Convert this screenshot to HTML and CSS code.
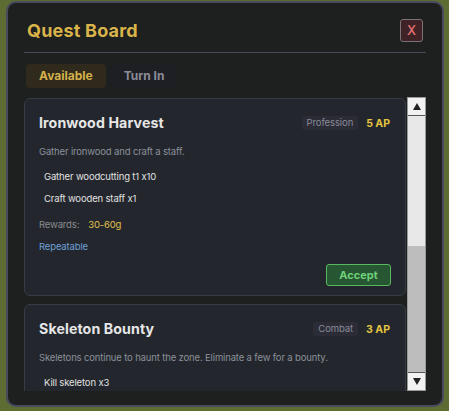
FILE: index.html
```html
<!DOCTYPE html>
<html>
<head>
<meta charset="utf-8">
<link rel="stylesheet" href="styles.css">
</head>
<body>
<div class="panel">
  <div class="header">
    <h1 class="title">Quest Board</h1>
    <button class="close">X</button>
  </div>
  <div class="tabs">
    <div class="tab active">Available</div>
    <div class="tab">Turn In</div>
  </div>
  <div class="list-wrap">
    <div class="list">
      <div class="card">
        <div class="card-head">
          <div class="card-title">Ironwood Harvest</div>
          <div class="meta"><span class="tag">Profession</span><span class="ap">5 AP</span></div>
        </div>
        <div class="desc">Gather ironwood and craft a staff.</div>
        <div class="objectives">
          <div class="obj">Gather woodcutting t1 x10</div>
          <div class="obj">Craft wooden staff x1</div>
        </div>
        <div class="rewards"><span class="rlabel">Rewards:</span><span class="rval">30-60g</span></div>
        <div class="repeat">Repeatable</div>
        <div class="actions"><button class="accept">Accept</button></div>
      </div>
      <div class="card">
        <div class="card-head">
          <div class="card-title">Skeleton Bounty</div>
          <div class="meta"><span class="tag">Combat</span><span class="ap">3 AP</span></div>
        </div>
        <div class="desc">Skeletons continue to haunt the zone. Eliminate a few for a bounty.</div>
        <div class="objectives">
          <div class="obj">Kill skeleton x3</div>
        </div>
      </div>
    </div>
    <div class="scrollbar">
      <div class="sb-btn"><span class="arrow-up"></span></div>
      <div class="sb-track">
        <div class="sb-thumb"></div>
      </div>
      <div class="sb-btn"><span class="arrow-down"></span></div>
    </div>
  </div>
</div>
</body>
</html>
```

FILE: styles.css
```css
* { box-sizing: border-box; }
html, body { margin: 0; padding: 0; }
body {
  width: 449px;
  height: 411px;
  overflow: hidden;
  background: #5c6c33;
  font-family: Inter, "Liberation Sans", sans-serif;
  font-feature-settings: "calt" 0;
  padding: 1px 0 0 6px;
}
.panel {
  width: 438px;
  height: 406px;
  border: 2px solid #4a4a5e;
  border-radius: 10px;
  background: #1e1f1f;
  padding: 16px 16px 14px;
  display: flex;
  flex-direction: column;
}
.header {
  display: flex;
  align-items: center;
  justify-content: space-between;
  height: 34px;
  padding: 0 3px 10px;
  border-bottom: 1px solid #4a4a58;
  flex: none;
}
.title {
  margin: 0;
  font-size: 18px;
  font-weight: 700;
  color: #d8b44a;
  line-height: 24px;
  letter-spacing: 0.2px;
}
.close {
  width: 23px;
  height: 23px;
  margin: 0;
  padding: 0;
  border: 1px solid #7a7274;
  border-radius: 3px;
  background: #3f2225;
  color: #e07272;
  font-family: Inter, "Liberation Sans", sans-serif;
  font-size: 13px;
  font-weight: 500;
  line-height: 21px;
}
.tabs {
  display: flex;
  gap: 5px;
  margin-top: 11px;
  padding-left: 2px;
  flex: none;
}
.tab {
  height: 24px;
  line-height: 24px;
  padding: 0 13px;
  border-radius: 4px;
  background: #1e1f25;
  color: #8c8c98;
  font-size: 12px;
  font-weight: 700;
}
.tab.active {
  background: #302a1d;
  color: #d4b04a;
}
.list-wrap {
  margin-top: 9px;
  flex: 1;
  display: flex;
  gap: 1px;
  min-height: 0;
}
.list {
  width: 382px;
  overflow: hidden;
  padding-top: 1px;
}
.card {
  border: 1px solid #363b44;
  border-radius: 6px;
  background: #23272d;
  padding: 14px 14px 9px;
  margin-bottom: 8px;
}
.card-head {
  display: flex;
  align-items: center;
  justify-content: space-between;
  height: 20px;
}
.card-title {
  font-size: 14.2px;
  font-weight: 700;
  color: #e6e6e6;
  line-height: 20px;
  letter-spacing: 0.1px;
}
.meta {
  display: flex;
  align-items: center;
  gap: 8px;
  padding-right: 1px;
}
.tag {
  height: 14px;
  line-height: 14px;
  padding: 0 5px;
  border-radius: 3px;
  background: #2b2c36;
  color: #8a8a96;
  font-size: 9.5px;
  letter-spacing: -0.1px;
}
.ap {
  color: #e5c441;
  font-size: 10.5px;
  font-weight: 700;
}
.desc {
  margin-top: 12px;
  font-size: 9.5px;
  letter-spacing: -0.15px;
  line-height: 14px;
  color: #8b9099;
}
.objectives {
  margin-top: 8px;
}
.obj {
  padding-left: 5px;
  line-height: 20px;
  margin-bottom: 2px;
  font-size: 9.5px;
  letter-spacing: -0.15px;
  color: #e0e0e0;
}
.obj:last-child { margin-bottom: 0; }
.rewards {
  margin-top: 9px;
  font-size: 9.5px;
  letter-spacing: -0.15px;
  line-height: 14px;
  display: flex;
  gap: 9px;
}
.rlabel { color: #8a8a8e; }
.rval { color: #e2c24e; }
.repeat {
  margin-top: 8px;
  font-size: 9.5px;
  letter-spacing: -0.15px;
  line-height: 14px;
  color: #6f9fd6;
}
.actions {
  margin-top: 10px;
  display: flex;
  justify-content: flex-end;
}
.accept {
  width: 65px;
  height: 22px;
  margin: 0;
  padding: 0;
  border: 1px solid #58b860;
  border-radius: 3px;
  background: #265632;
  color: #6ed078;
  font-family: Inter, "Liberation Sans", sans-serif;
  font-size: 11px;
  font-weight: 700;
}
.scrollbar {
  width: 19px;
  display: flex;
  flex-direction: column;
  border: 1px solid #9a9a9a;
  background: #bdbdbd;
}
.sb-btn {
  height: 18px;
  background: #f2f2f2;
  display: flex;
  align-items: center;
  justify-content: center;
  flex: none;
}
.sb-btn:first-child { border-bottom: 1px solid #555; }
.sb-btn:last-child { border-top: 1px solid #555; }
.sb-track {
  flex: 1;
  background: #bdbdbd;
}
.sb-thumb {
  height: 130px;
  background: #e8e8e8;
}
.arrow-up {
  width: 0; height: 0;
  border-left: 4px solid transparent;
  border-right: 4px solid transparent;
  border-bottom: 7px solid #222;
}
.arrow-down {
  width: 0; height: 0;
  border-left: 4px solid transparent;
  border-right: 4px solid transparent;
  border-top: 7px solid #222;
}
```
